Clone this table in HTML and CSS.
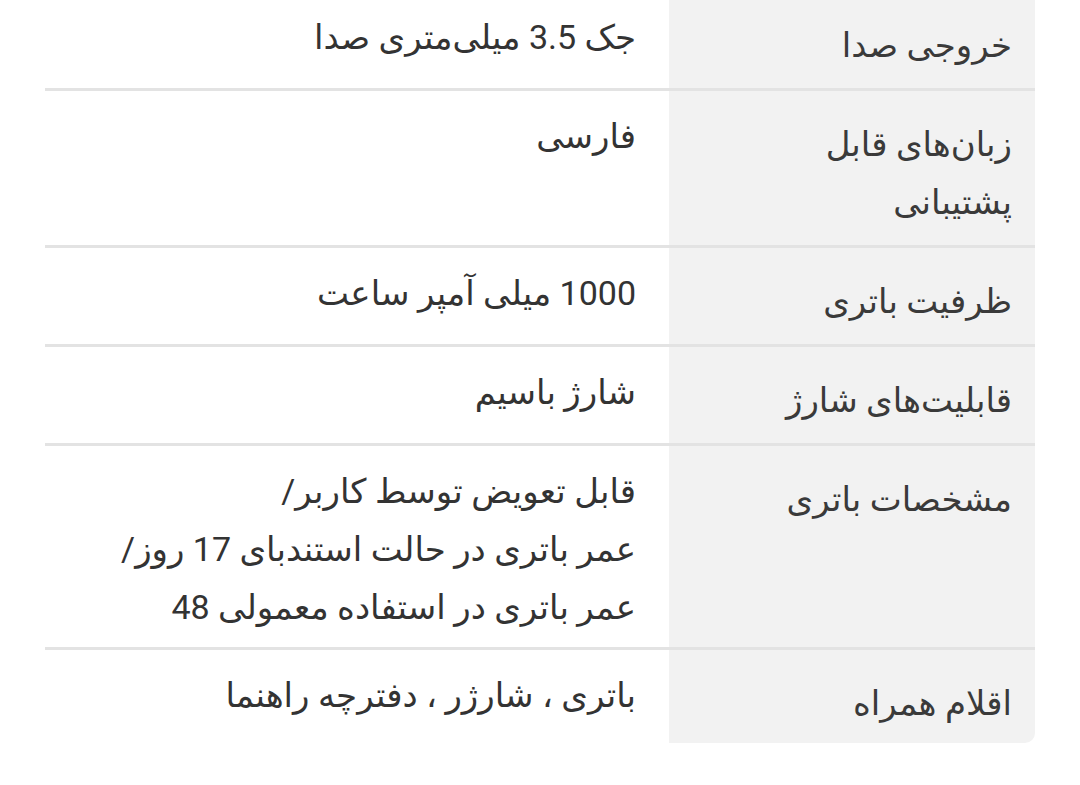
FILE: index.html
```html
<!DOCTYPE html>
<html lang="fa" dir="rtl">
<head>
<meta charset="utf-8">
<link rel="stylesheet" href="styles.css">
</head>
<body>
<div class="specs">
  <div class="row">
    <div class="label">خروجی صدا</div>
    <div class="value">جک 3.5 میلی‌متری صدا</div>
  </div>
  <div class="row">
    <div class="label">زبان‌های قابل<br>پشتیبانی</div>
    <div class="value">فارسی</div>
  </div>
  <div class="row">
    <div class="label">ظرفیت باتری</div>
    <div class="value">1000 میلی آمپر ساعت</div>
  </div>
  <div class="row">
    <div class="label">قابلیت‌های شارژ</div>
    <div class="value">شارژ باسیم</div>
  </div>
  <div class="row">
    <div class="label">مشخصات باتری</div>
    <div class="value">قابل تعویض توسط کاربر/<br>عمر باتری در حالت استندبای 17 روز/<br>عمر باتری در استفاده معمولی 48</div>
  </div>
  <div class="row last">
    <div class="label">اقلام همراه</div>
    <div class="value">باتری ، شارژر ، دفترچه راهنما</div>
  </div>
</div>
</body>
</html>
```
FILE: styles.css
```css
html, body {
  margin: 0;
  padding: 0;
  background: #ffffff;
}
body {
  font-family: Roboto, "DejaVu Sans", sans-serif;
  font-size: 34px;
  color: #3a3a3a;
}
.specs {
  width: 990px;
  margin: -8px 45px 0 45px;
  display: flex;
  flex-direction: column;
}
.row {
  display: grid;
  grid-template-columns: 366px 624px;
  border-bottom: 3px solid #e3e3e3;
}
.row.last {
  border-bottom: none;
}
.label {
  background: #f2f2f2;
  padding: 24px 23px 14px 10px;
  line-height: 58px;
  color: #3a3a3a;
}
.row.last .label {
  border-bottom-right-radius: 10px;
  padding-bottom: 11px;
}
.value {
  padding: 16px 33px 11px 10px;
  line-height: 58px;
  color: #333333;
}
```
